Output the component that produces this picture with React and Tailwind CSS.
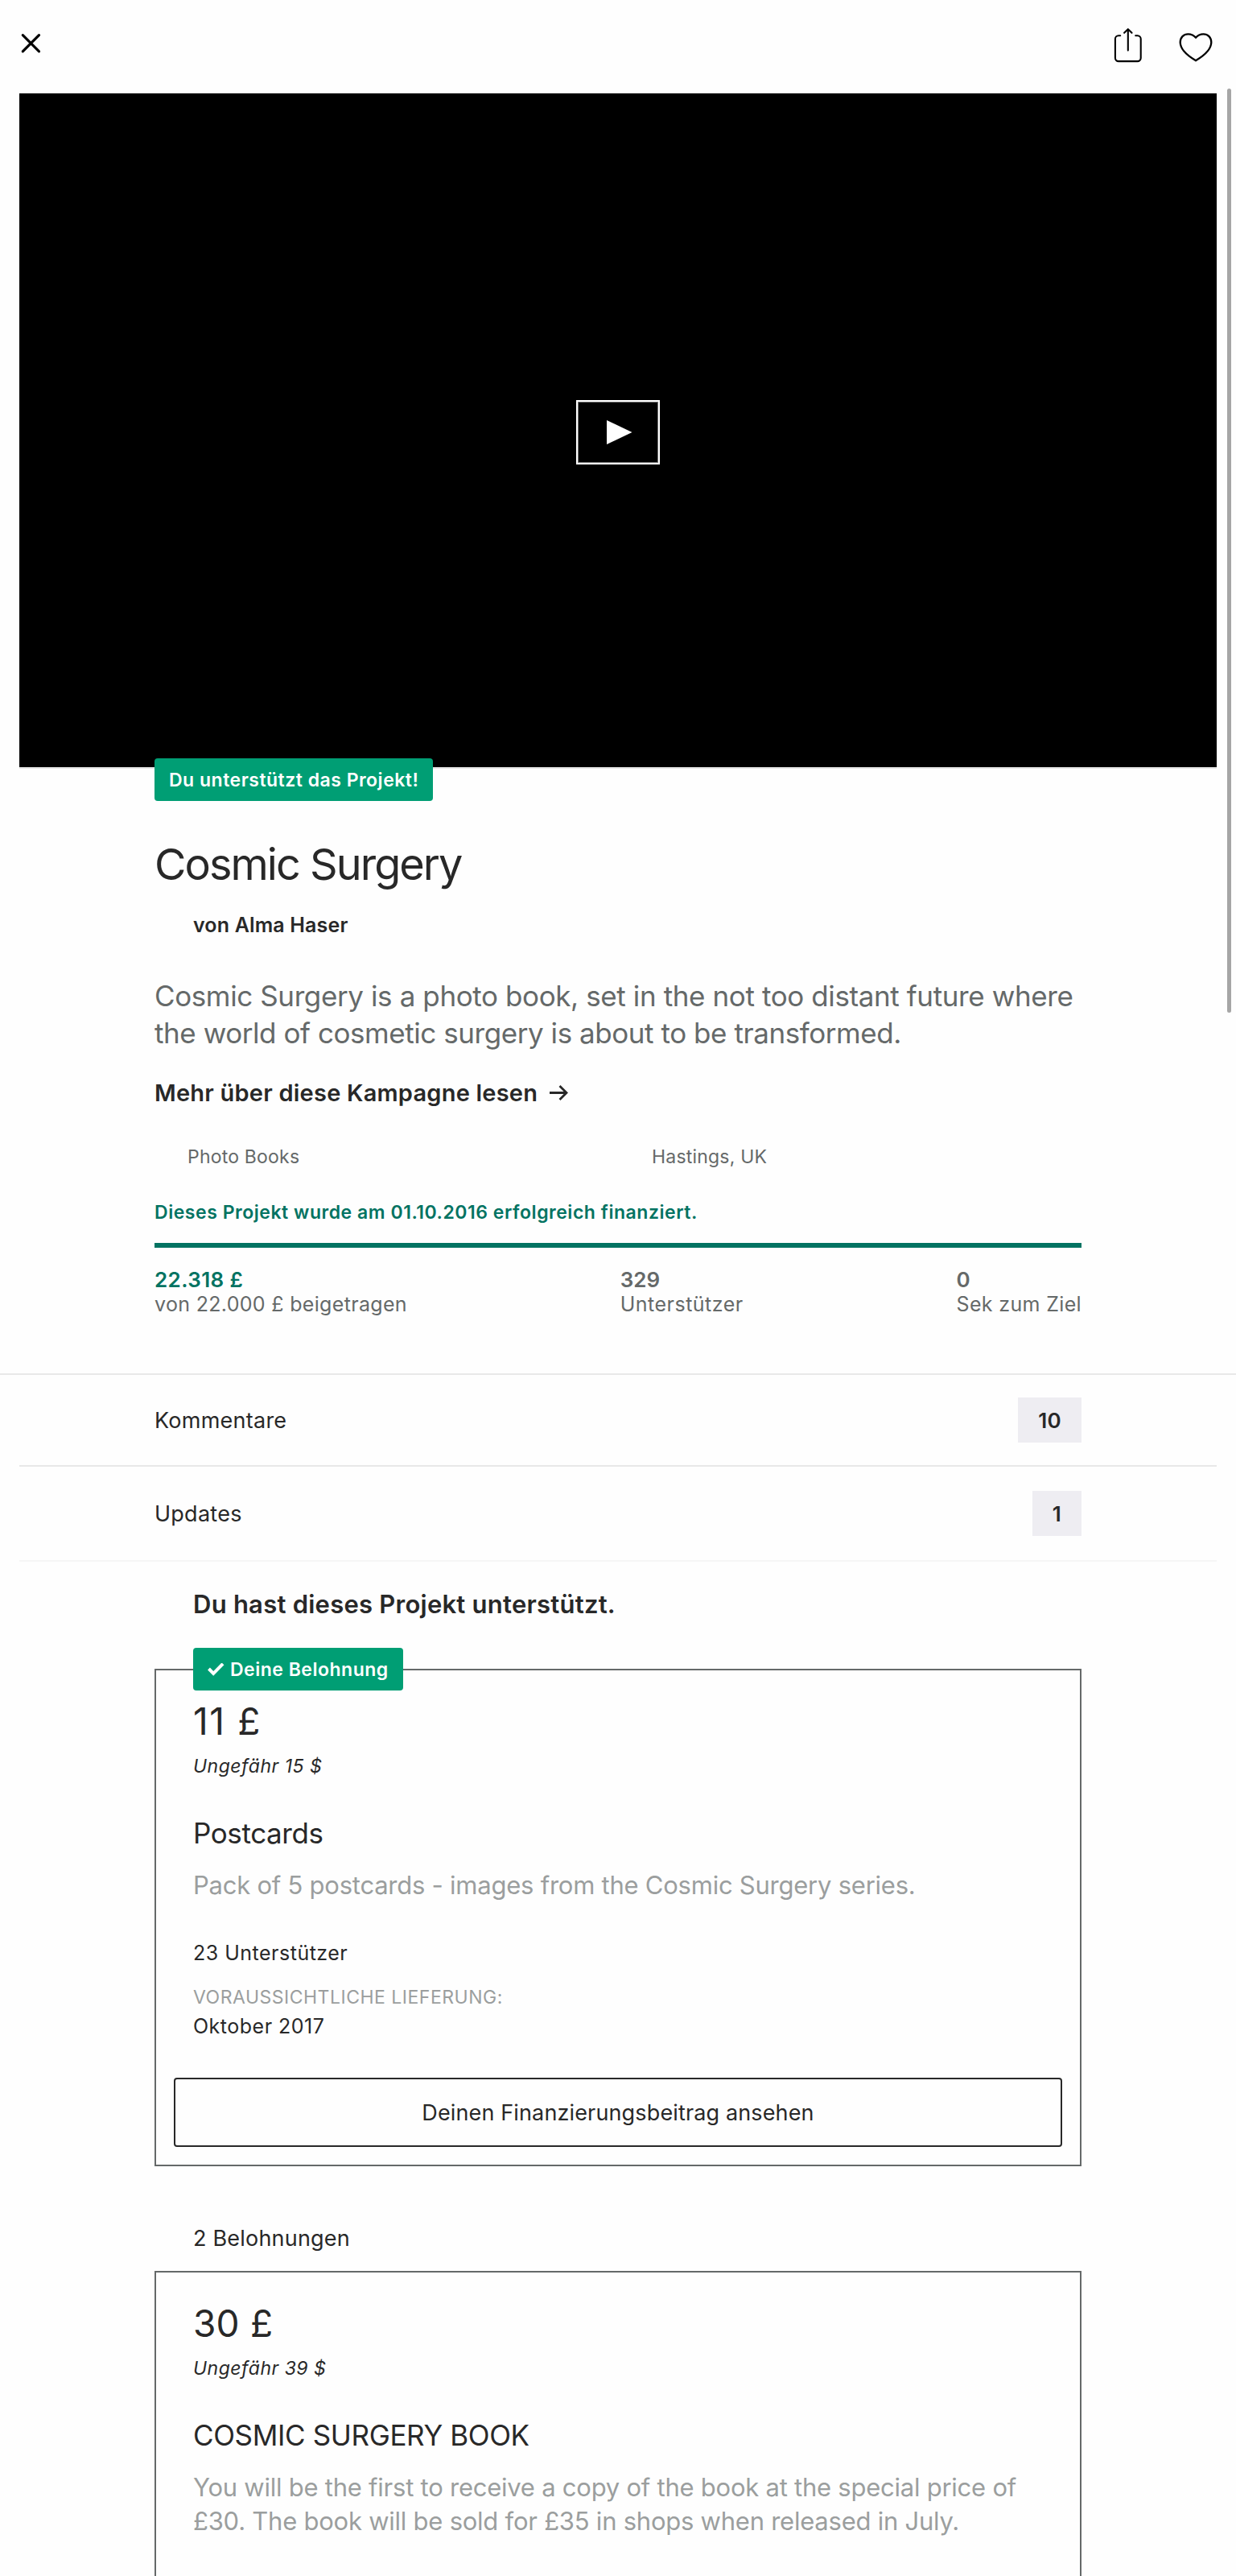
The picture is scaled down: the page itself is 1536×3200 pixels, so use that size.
import React from 'react';

function CloseIcon() {
  return (
    <svg width="30" height="50" viewBox="0 0 30 50" fill="none" stroke="#000" strokeWidth="3.2" strokeLinecap="round">
      <path d="M4.3 13.6 24.5 33.8M24.5 13.6 4.3 33.8" />
    </svg>
  );
}

function ShareIcon() {
  return (
    <svg width="44" height="50" viewBox="0 0 44 50" fill="none" stroke="#000" strokeWidth="2.1" strokeLinecap="round" strokeLinejoin="round">
      <path d="M12.2 14.2H10a4.1 4.1 0 0 0-4.1 4.1V42A4.1 4.1 0 0 0 10 46.1h23.6a4.1 4.1 0 0 0 4.1-4.1V18.3a4.1 4.1 0 0 0-4.1-4.1h-2.4" />
      <path d="M21.8 32.6V6.4M17.1 10.8l4.7-4.6 4.7 4.6" />
    </svg>
  );
}

function HeartIcon() {
  return (
    <svg width="50" height="50" viewBox="0 0 50 50" fill="none" stroke="#000" strokeWidth="2.3" strokeLinejoin="round">
      <path d="M24 45.3C15.5 40.3 4.7 32 4.7 22.6 4.7 16.4 9 12.4 14.5 12.4c4.200 0 7.300 1.800 9.500 4.400 2.200-2.600 5.300-4.400 9.500-4.400 5.500 0 9.800 4 9.800 10.200C43.300 32 32.500 40.300 24 45.300Z" />
    </svg>
  );
}

function Tag({ children }) {
  return (
    <div className="inline-flex h-[53px] items-center rounded-[4px] bg-[#009e74] px-[18px] pt-[2px] text-[23px] font-semibold tracking-[0.5px] whitespace-nowrap text-white">
      {children}
    </div>
  );
}

function Stat({ value, label, accent, labelClass }) {
  return (
    <div>
      <div className={accent ? 'text-[26px] leading-[31px] font-semibold tracking-[0.4px] text-[#037362]' : 'text-[26px] leading-[31px] font-semibold'}>
        {value}
      </div>
      <div className={`text-[25px] leading-[30px] ${labelClass}`}>{label}</div>
    </div>
  );
}

function CountRow({ label, count, className }) {
  return (
    <div className={`flex items-center justify-between px-[168px] ${className}`}>
      <span className="pt-[2px] text-[27px] tracking-[0.25px]">{label}</span>
      <span className="flex h-14 items-center bg-[#eeedf2] px-[25px] text-[26px] font-semibold tracking-[0.3px]">{count}</span>
    </div>
  );
}

function Reward({ price, priceClass, approx, title, titleClass, children }) {
  return (
    <div className="px-[46px]">
      <div className={`text-[46px] leading-[56px] ${priceClass}`}>{price}</div>
      <div className="mt-[13px] text-[23px] leading-[30px] tracking-[0.5px] italic">{approx}</div>
      <div className={`mt-[46px] text-[35px] leading-[44px] ${titleClass}`}>{title}</div>
      <div className="mt-[22px] text-[31px] leading-[42px] tracking-[-0.24px] whitespace-nowrap text-[#9b9e9e]">{children}</div>
    </div>
  );
}

export default function App() {
  return (
    <div className="relative h-[3200px] w-[1536px] overflow-hidden bg-[#fefefe] font-['Inter',sans-serif] text-[#282828]">
      <header className="flex h-[116px] items-start justify-between px-6 pt-[30px]">
        <CloseIcon />
        <div className="flex gap-[38px]">
          <ShareIcon />
          <HeartIcon />
        </div>
      </header>

      <div className="mx-6 flex h-[839px] justify-center border-b-2 border-[#e8e8e8] bg-black pt-[381px]">
        <div className="flex h-[80px] w-[104px] items-center border-2 border-white bg-black pl-[36px] ring-1 ring-[#777] ring-inset">
          <svg width="32" height="30" viewBox="0 0 32 30" fill="#fff">
            <path d="M0 0 31.500 15 0 30Z" />
          </svg>
        </div>
      </div>

      <section className="px-48">
        <div className="relative -mt-[13px] h-[53px]">
          <Tag>Du unterstützt das Projekt!</Tag>
        </div>
        <h1 className="mt-[47px] text-[54px] leading-[64px] tracking-[-1.96px]">Cosmic Surgery</h1>
        <div className="mt-[27px] pl-12 text-[25px] leading-8 font-semibold tracking-[0.15px]">von Alma Haser</div>
        <p className="mt-[49px] text-[35px] leading-[46px] whitespace-nowrap text-[#656969]">
          <span className="block tracking-[-0.39px]">Cosmic Surgery is a photo book, set in the not too distant future where</span>
          <span className="block tracking-[-0.44px]">the world of cosmetic surgery is about to be transformed.</span>
        </p>
        <div className="mt-[34px] flex items-center gap-[14px] text-[29px] leading-[36px] font-semibold tracking-[0.22px]">
          Mehr über diese Kampagne lesen
          <svg width="24" height="20" viewBox="0 0 24 20" fill="none" stroke="#282828" strokeWidth="2.8">
            <path d="M1 9.500H22M13.500 1 22 9.500 13.500 18" />
          </svg>
        </div>
        <div className="mt-[46px] grid grid-cols-2 text-[23px] leading-[30px] tracking-[0.2px] text-[#656969]">
          <span className="pl-[41px]">Photo Books</span>
          <span className="pl-[42px]">Hastings, UK</span>
        </div>
        <div className="mt-[39px] text-[23px] leading-[30px] font-semibold tracking-[0.54px] text-[#037362]">
          Dieses Projekt wurde am 01.10.2016 erfolgreich finanziert.
        </div>
        <div className="mt-[23px] h-1.5 bg-[#037362]" />
        <div className="mt-6 mb-[71px] flex justify-between text-[#656969]">
          <Stat accent value="22.318 £" label="von 22.000 £ beigetragen" labelClass="tracking-[0.32px]" />
          <Stat value="329" label="Unterstützer" labelClass="tracking-[0.5px]" />
          <Stat value="0" label="Sek zum Ziel" labelClass="tracking-[0.35px]" />
        </div>
      </section>

      <section className="border-t-2 border-[#e8e8e8] px-6">
        <CountRow label="Kommentare" count="10" className="h-28" />
        <CountRow label="Updates" count="1" className="h-[120px] border-y-2 border-t-[#e8e8e8] border-b-[#f6f6f6]" />
      </section>

      <section className="px-48">
        <h2 className="mt-[33px] pl-12 text-[31px] leading-10 font-semibold tracking-[0.24px]">Du hast dieses Projekt unterstützt.</h2>

        <div className="relative mt-[60px] border-2 border-[#656969] pt-[35px] pb-[22px]">
          <div className="absolute -top-[28px] left-[46px] h-[53px]">
            <Tag>
              <svg className="mr-[7px]" width="21" height="17" viewBox="0 0 21 17" fill="none" stroke="#fff" strokeWidth="4">
                <path d="M1.500 7 7.200 12.800 19 0.800" />
              </svg>
              Deine Belohnung
            </Tag>
          </div>
          <Reward price="11 £" priceClass="tracking-[1.6px]" approx="Ungefähr 15 $" title="Postcards" titleClass="tracking-[-0.4px]">
            Pack of 5 postcards - images from the Cosmic Surgery series.
          </Reward>
          <div className="mt-[47px] px-[46px] text-[25px] leading-8 tracking-[0.5px]">
            <div>23 Unterstützer</div>
            <div className="mt-6 text-[23px] leading-[30px] text-[#9b9e9e]">VORAUSSICHTLICHE LIEFERUNG:</div>
            <div className="mt-[5px]">Oktober 2017</div>
          </div>
          <div className="mt-12 px-[22px]">
            <button className="block h-[86px] w-full rounded-[4px] border-2 border-[#282828] pt-[2px] text-[27px] tracking-[0.14px]">
              Deinen Finanzierungsbeitrag ansehen
            </button>
          </div>
        </div>

        <div className="mt-[72px] pl-12 text-[27px] leading-[36px] tracking-[0.2px]">2 Belohnungen</div>

        <div className="mt-[22px] h-[500px] border-2 border-[#656969] pt-[35px]">
          <Reward price="30 £" priceClass="tracking-[0.2px]" approx="Ungefähr 39 $" title="COSMIC SURGERY BOOK" titleClass="tracking-[-0.36px]">
            You will be the first to receive a copy of the book at the special price of
            <br />
            £30. The book will be sold for £35 in shops when released in July.
          </Reward>
        </div>
      </section>

      <div className="absolute top-[110px] right-[6px] h-[1148px] w-[5px] rounded-full bg-[#a6a6a6]" />
    </div>
  );
}
